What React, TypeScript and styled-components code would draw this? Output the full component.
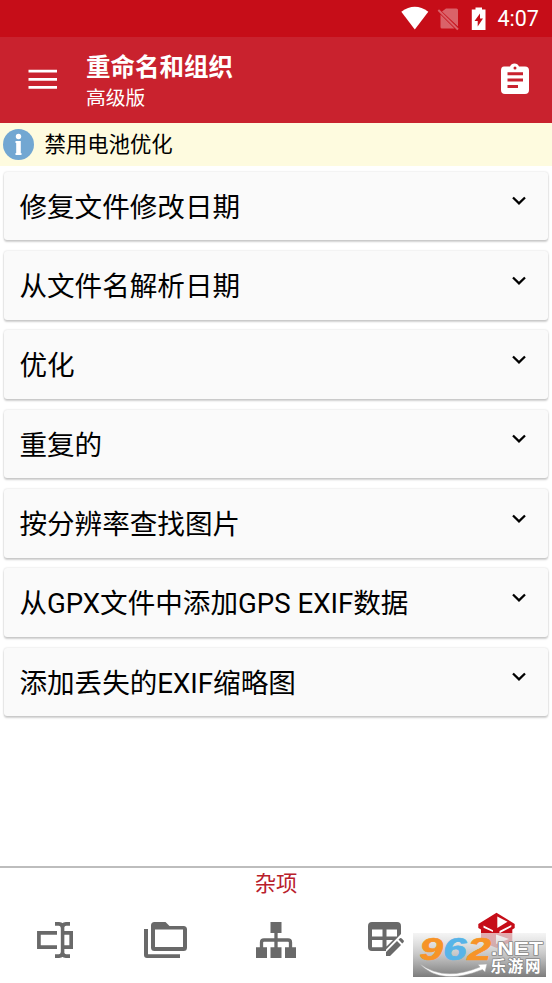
import React from 'react';
import styled, { createGlobalStyle } from 'styled-components';

const GlobalStyle = createGlobalStyle`
  * { box-sizing: border-box; }
  body {
    margin: 0;
    background: #fff;
    font-family: Roboto, "Noto Sans CJK SC", sans-serif;
    color: #000;
  }
  svg { display: block; flex: none; }
`;

const Screen = styled.div`
  width: 552px;
  height: 983px;
  display: flex;
  flex-direction: column;
  overflow: hidden;
`;

const StatusBar = styled.div`
  height: 37px;
  background: #c60d18;
  display: flex;
  align-items: center;
  justify-content: flex-end;
  padding-right: 11.5px;
  color: #fff;
`;

const Clock = styled.span`
  font-size: 21.5px;
  line-height: 37px;
  width: 43px;
  margin-left: 11.5px;
  white-space: nowrap;
`;

const Toolbar = styled.header`
  height: 86px;
  background: #c9222e;
  color: #fff;
  display: flex;
  padding: 0 23px 0 28px;
`;

const MenuIcon = styled.svg`
  margin-top: 32px;
`;

const Titles = styled.div`
  flex: 1;
  margin-left: 29px;
  padding-top: 15px;
`;

const Title = styled.h1`
  margin: 0;
  font-size: 24.5px;
  font-weight: 700;
  line-height: 31px;
`;

const Subtitle = styled.div`
  font-size: 19.8px;
  line-height: 32px;
`;

const ClipboardIcon = styled.svg`
  margin-top: 26px;
`;

const Notice = styled.div`
  height: 43px;
  background: #fefbdf;
  display: flex;
  align-items: center;
  padding-left: 3px;
  gap: 10.4px;
  font-size: 21.4px;
  line-height: 43px;
`;

const List = styled.main`
  flex: 1;
  display: flex;
  flex-direction: column;
  gap: 10.85px;
  padding: 5.7px 4px 0;
`;

const Card = styled.section`
  height: 68.5px;
  flex: none;
  border-radius: 3px;
  background: #fafafa;
  box-shadow: 0 2px 2px rgba(0, 0, 0, 0.18), 0 0 2px rgba(0, 0, 0, 0.18);
  display: flex;
  justify-content: space-between;
  padding: 0 21px 0 15.4px;
  font-size: 27.6px;
  line-height: 72px;
  white-space: nowrap;
`;

const Chevron = styled.svg`
  margin-top: 23.5px;
`;

const Footer = styled.footer`
  position: relative;
  height: 117px;
  border-top: 2px solid #bdbdbd;
`;

const TabLabel = styled.div`
  height: 33px;
  text-align: center;
  color: #b9202b;
  font-size: 21.3px;
  line-height: 32px;
`;

const Tabs = styled.nav`
  display: grid;
  grid-template-columns: repeat(5, 1fr);
  justify-items: center;
  color: #696969;
`;

const Tab = styled.div<{ $raised?: boolean }>`
  padding-top: ${(p) => (p.$raised ? 11 : 21)}px;
`;

const Watermark = styled.svg`
  position: absolute;
  right: 6px;
  bottom: 6px;
`;

const items = [
  '修复文件修改日期',
  '从文件名解析日期',
  '优化',
  '重复的',
  '按分辨率查找图片',
  '从GPX文件中添加GPS EXIF数据',
  '添加丢失的EXIF缩略图',
];

const StatusIcons = () => (
  <svg width="86" height="26" viewBox="0 0 86 26" fill="#fff">
    <path d="M1.300 5.500Q14.800-4.500 28.300 5.500L14.800 23.200Z" transform="translate(0 .3)" />
    <g opacity=".35">
      <path d="M46 2.500h10.500q1.500 0 1.500 1.500v16.500L42 5.500ZM40.500 8.500L54.500 22.500H42q-1.500 0-1.500-1.500Z" />
      <path d="M38.300 4L58 23.500" stroke="#fff" strokeWidth="2" />
    </g>
    <path d="M75.500 1.500h6.500v2h3.500V24H71.800V3.500h3.700ZM80 7.500l-5.500 7.500h3.200V20.500l5.300-8h-3Z" fillRule="evenodd" />
  </svg>
);

const RenameIcon = () => (
  <svg width="36" height="36" viewBox="0 0 36 36" fill="none" stroke="currentColor" strokeWidth="3.700">
    <path d="M20 10.800H1.900V25.200H20M27 10.800H34.200V25.200H27" />
    <path d="M25.500 3V33" />
    <path d="M18 1.900H22Q25.500 2.200 25.500 5Q25.500 2.200 29 1.900H33M18 34.100H22Q25.500 33.800 25.500 31Q25.500 33.800 29 34.100H33" />
    <path d="M21.800 6V30" stroke="#fff" strokeWidth="3.400" />
  </svg>
);

const FoldersIcon = () => (
  <svg width="43" height="36" viewBox="0 0 43 36" fill="currentColor">
    <path fillRule="evenodd" d="M10.500 0H21.500L25.500 4H39.500Q43 4 43 7.500V25.500Q43 29 39.500 29H10.500Q7 29 7 25.500V3.500Q7 0 10.500 0ZM11 7.500V25H39V7.500Z" />
    <path d="M0 7H4V32.300H36V36H3Q0 36 0 33Z" />
  </svg>
);

const SitemapIcon = () => (
  <svg width="40" height="36" viewBox="0 0 40 36" fill="currentColor">
    <path d="M14.500 0H25.500V11H14.500ZM0 25.300H11V36H0ZM14.500 25.300H25.500V36H14.500ZM29 25.300H40V36H29Z" />
    <path d="M20 10V26M5.500 26V20.500Q5.500 18 8 18H32Q34.500 18 34.500 20.500V26" fill="none" stroke="currentColor" strokeWidth="3.300" />
  </svg>
);

const TableEditIcon = () => (
  <svg width="36" height="36" viewBox="0 0 36 36" fill="currentColor">
    <path fillRule="evenodd" d="M4 0H29Q33 0 33 4V12L18 27.500V29H4Q0 29 0 25V4Q0 0 4 0ZM4 7.500V14.500H14.500V7.500ZM18.500 7.500V14.500H29V7.500ZM4 18V25.300H14.500V18ZM18.500 18V24.500L25 18Z" />
    <path d="M18 30L29 19L33 23L22 34H18ZM30.500 17.500L32 16.300Q33 15.800 34 16.700L35.500 18.200Q36.300 19.300 35.500 20.200L34.200 21.500Z" />
  </svg>
);

const BoxIcon = () => (
  <svg width="38" height="37" viewBox="0 0 38 37">
    <path d="M18.500.7L36.700 12V16L34.300 17.500V29.500L18.700 36L3 29.500V17.500L.3 16V12Z" fill="#c60d18" />
    <path d="M19.300 4.500L29.500 9.800L19.300 16Z" fill="#fff" />
    <path d="M5.500 13.500L15 18.300V20L5.500 15.800ZM21.500 19L33.300 13V15L21.500 21.300Z" fill="#fff" />
    <path d="M18 22.500L31 27L18 32Z" fill="#fff" />
  </svg>
);

const SiteMark = () => (
  <Watermark width="133" height="44" viewBox="0 0 133 44">
    <defs>
      <linearGradient id="shade" x1="0" y1="0" x2="0" y2="1">
        <stop offset="0" stopColor="#f0f0f0" stopOpacity=".7" />
        <stop offset=".5" stopColor="#bdbdbd" stopOpacity=".88" />
        <stop offset="1" stopColor="#7c7c7c" />
      </linearGradient>
    </defs>
    <rect width="133" height="44" fill="url(#shade)" />
    <path d="M7 31Q31 49 67 34L65 31.500L74 31L72 39L69.500 36.500Q28 53 7 31Z" fill="#fff" stroke="#aaa" strokeWidth=".5" />
    <g fontFamily="Liberation Sans" fontWeight="700" fontStyle="italic" fontSize="32" strokeWidth=".7" strokeLinejoin="round">
      <text transform="translate(6.500 27) scale(1.320 1)" fill="#f79427" stroke="#f79427">9</text>
      <text transform="translate(30 27) scale(1.320 1)" fill="#57b4e8" stroke="#57b4e8">6</text>
      <text transform="translate(54.500 27) scale(1.320 1)" fill="#f79427" stroke="#f79427">2</text>
    </g>
    <g fill="#fff" stroke="#888" strokeWidth="1.600" paintOrder="stroke" strokeLinejoin="round">
      <text x="78" y="22" fontFamily="Liberation Sans" fontWeight="700" fontSize="18.500" textLength="52" lengthAdjust="spacingAndGlyphs">.NET</text>
      <text x="77.500" y="39" fontFamily="Noto Sans CJK SC" fontWeight="700" fontSize="15.500" textLength="50">乐游网</text>
    </g>
  </Watermark>
);

export default function App() {
  return (
    <Screen>
      <GlobalStyle />
      <StatusBar>
        <StatusIcons />
        <Clock>4:07</Clock>
      </StatusBar>
      <Toolbar>
        <MenuIcon width="29" height="20" viewBox="0 0 29 20" fill="#fff">
          <path d="M.5 .8H29V3.500H.5ZM.5 8.900H29V11.700H.5ZM.5 17H29V19.800H.5Z" />
        </MenuIcon>
        <Titles>
          <Title>重命名和组织</Title>
          <Subtitle>高级版</Subtitle>
        </Titles>
        <ClipboardIcon width="29" height="31" viewBox="0 0 29 31">
          <path transform="translate(0 .5)" fill="#fff" d="M4 3H10Q11.200 0 14.500 0T19 3H25Q29 3 29 7V26.500Q29 30.500 25 30.500H5Q1 30.500 1 26.500V7Q1 3 4 3Z" />
          <circle cx="15" cy="5" r="1.500" fill="#c9222e" />
          <path fill="#c9222e" d="M7.500 9.300H23V12.200H7.500ZM7.500 15.500H23V18.400H7.500ZM7.500 22H18V24.900H7.500Z" />
        </ClipboardIcon>
      </Toolbar>
      <Notice>
        <svg width="31" height="31" viewBox="0 0 31 31">
          <circle cx="15.500" cy="15.500" r="15.500" fill="#72a7d2" />
          <circle cx="15.500" cy="7.500" r="2.700" fill="#fff" />
          <path d="M12.500 12H17.800V24H18.500V26H12.500V24H13.200V14H12.500Z" fill="#fff" />
        </svg>
        禁用电池优化
      </Notice>
      <List>
        {items.map((label) => (
          <Card key={label}>
            {label}
            <Chevron width="16" height="11" viewBox="0 0 16 11">
              <path d="M2 2.500L8 8.300L14 2.500" fill="none" stroke="#000" strokeWidth="2.300" />
            </Chevron>
          </Card>
        ))}
      </List>
      <Footer>
        <TabLabel>杂项</TabLabel>
        <Tabs>
          <Tab><RenameIcon /></Tab>
          <Tab><FoldersIcon /></Tab>
          <Tab><SitemapIcon /></Tab>
          <Tab><TableEditIcon /></Tab>
          <Tab $raised><BoxIcon /></Tab>
        </Tabs>
        <SiteMark />
      </Footer>
    </Screen>
  );
}
